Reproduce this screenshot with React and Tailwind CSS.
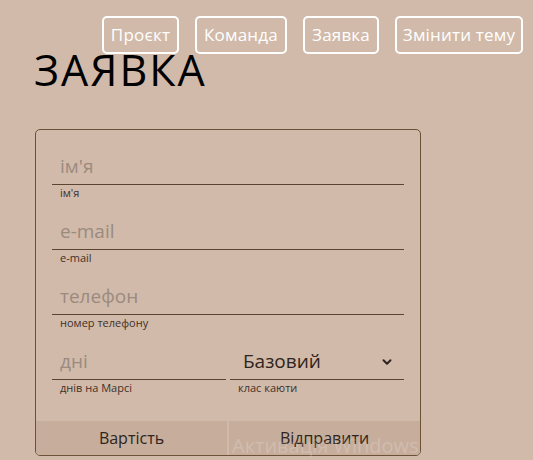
import React from 'react';
import { ChevronDown } from 'lucide-react';

const navItems = [
  { label: 'Проєкт', w: 'w-[77px]' },
  { label: 'Команда', w: 'w-[92px]' },
  { label: 'Заявка', w: 'w-[76px]' },
  { label: 'Змінити тему', w: 'w-[128px]' },
];

const fields = [
  { placeholder: "ім'я", label: "ім'я" },
  { placeholder: 'e-mail', label: 'e-mail' },
  { placeholder: 'телефон', label: 'номер телефону' },
];

const App = () => {
  return (
    <div className="relative min-h-[460px] w-full overflow-hidden bg-[#d1baa9] font-['Open_Sans',sans-serif]">
      {/* Nav */}
      <nav className="flex justify-end gap-4 pr-[10px] pt-4">
        {navItems.map((item) => (
          <button
            key={item.label}
            className={`h-[38px] ${item.w} rounded-[5px] border-2 border-white text-[17px] tracking-[0.2px] text-white`}
          >
            {item.label}
          </button>
        ))}
      </nav>

      <h1 className="ml-[34px] -mt-[5px] text-[43px] leading-[42px] tracking-[2px] text-black">ЗАЯВКА</h1>

      {/* Form */}
      <form className="ml-[35px] mt-[38px] w-[386px] overflow-hidden rounded-[5px] border border-[#6b5237]">
        <div className="px-4 pt-[19px]">
          {fields.map((f) => (
            <div key={f.label} className="mb-[14px]">
              <div className="flex h-[36px] items-center border-b border-[#5c4530] px-2 text-[19px] text-[#9a8a80]">
                {f.placeholder}
              </div>
              <div className="px-2 text-[11px] leading-[15px] text-[#3f3129]">{f.label}</div>
            </div>
          ))}

          <div className="flex gap-1">
            <div className="flex-1">
              <div className="flex h-[36px] items-center border-b border-[#5c4530] px-2 text-[19px] text-[#9a8a80]">
                дні
              </div>
              <div className="px-2 text-[11px] leading-[15px] text-[#3f3129]">днів на Марсі</div>
            </div>
            <div className="flex-1">
              <div className="flex h-[36px] items-center justify-between border-b border-[#5c4530] pl-[13px] pr-[10px] text-[19px] text-[#2f2520]">
                <span>Базовий</span>
                <ChevronDown className="h-[14px] w-[14px]" strokeWidth={3.5} />
              </div>
              <div className="px-2 text-[11px] leading-[15px] text-[#3f3129]">клас каюти</div>
            </div>
          </div>
        </div>

        <div className="mt-[26px] flex gap-[2px]">
          <button type="button" className="h-[34px] flex-1 bg-[#c6ad9c] text-[16px] text-[#2f2520]">
            Вартість
          </button>
          <button type="button" className="h-[34px] flex-1 bg-[#c6ad9c] text-[16px] text-[#2f2520]">
            Відправити
          </button>
        </div>
      </form>

      {/* OS watermark */}
      <div className="pointer-events-none absolute left-[232px] top-[434px] text-[20px] leading-[24px] text-white/20">
        Активація Windows
      </div>
    </div>
  );
};

export default App;
